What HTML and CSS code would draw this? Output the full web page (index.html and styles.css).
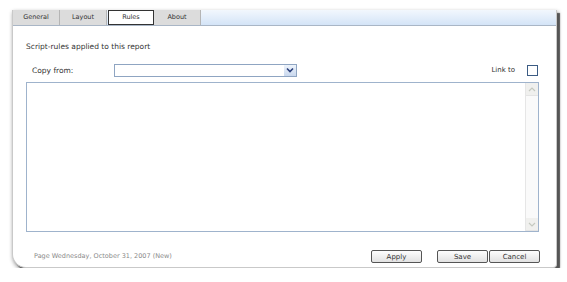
FILE: index.html
```html
<!DOCTYPE html>
<html lang="en">
<head>
    <meta charset="UTF-8">
    <title>Report Rules</title>
    <link rel="stylesheet" href="styles.css">
</head>
<body>
    <div class="window">
        <div class="tabs">
            <div class="tab">General</div>
            <div class="tab">Layout</div>
            <div class="tab active">Rules</div>
            <div class="tab">About</div>
        </div>
        <div class="content">
            <div class="title">Script-rules applied to this report</div>
            <div class="copy-row">
                <label class="copy-label">Copy from:</label>
                <div class="select">
                    <span class="select-btn">
                        <svg width="8" height="6" viewBox="0 0 8 6"><path d="M1 1.5 L4 4.5 L7 1.5" fill="none" stroke="#2a3f7a" stroke-width="1.6"/></svg>
                    </span>
                </div>
                <span class="link-label">Link to</span>
                <span class="checkbox"></span>
            </div>
            <div class="editor">
                <div class="editor-area"></div>
                <div class="scrollbar">
                    <span class="arrow">
                        <svg width="8" height="5" viewBox="0 0 8 5"><path d="M1 4 L4 1 L7 4" fill="none" stroke="#c5c9c0" stroke-width="1.2"/></svg>
                    </span>
                    <span class="arrow">
                        <svg width="8" height="5" viewBox="0 0 8 5"><path d="M1 1 L4 4 L7 1" fill="none" stroke="#c5c9c0" stroke-width="1.2"/></svg>
                    </span>
                </div>
            </div>
        </div>
        <div class="footer">
            <span class="status">Page Wednesday, October 31, 2007 (New)</span>
            <button class="btn apply">Apply</button>
            <button class="btn save">Save</button>
            <button class="btn">Cancel</button>
        </div>
    </div>
</body>
</html>
```

FILE: styles.css
```css
body {
    margin: 0;
    background: #fff;
    font-family: "DejaVu Sans", Verdana, sans-serif;
    color: #333;
}
.window {
    margin: 10px 0 0 12px;
    width: 543px;
    height: 257px;
    display: flex;
    flex-direction: column;
    background: #fff;
    border: 1px solid #c9c9c9;
    border-top: none;
    border-radius: 0 0 4px 14px;
    box-shadow: 3px 3px 1px #555, 1px 2px 4px #888;
}
.tabs {
    display: flex;
    height: 15px;
    background: linear-gradient(#f2f7fd, #d4e4f7);
    border-bottom: 1px solid #a9b6c6;
}
.tab {
    width: 46px;
    font-size: 6.5px;
    line-height: 15px;
    text-align: center;
    color: #333;
    background: #dcdcdc;
    border-right: 1px solid #b5b5b5;
}
.tab.active {
    background: #fff;
    border: 1px solid #333;
    line-height: 13px;
    box-sizing: border-box;
    height: 15px;
    margin-left: 1px;
}
.content {
    padding: 15px 17px 0 13px;
}
.title {
    font-size: 7.5px;
    color: #333;
    height: 11px;
    line-height: 11px;
}
.copy-row {
    display: flex;
    align-items: center;
    margin-top: 12px;
    height: 12px;
}
.copy-label {
    font-size: 7.5px;
    width: 82px;
    padding-left: 6px;
    color: #333;
}
.select {
    width: 181px;
    height: 11px;
    border: 1px solid #8fa5c2;
    display: flex;
    justify-content: flex-end;
}
.select-btn {
    width: 12px;
    height: 11px;
    background: linear-gradient(#edf3fb, #c9d8ee);
    display: flex;
    align-items: center;
    justify-content: center;
}
.link-label {
    margin-left: auto;
    font-size: 7px;
    color: #333;
    margin-right: 12px;
}
.checkbox {
    width: 9px;
    height: 9px;
    border: 1px solid #3c5c84;
    margin-right: 1px;
}
.editor {
    display: flex;
    margin-top: 6px;
    height: 148px;
    border: 1px solid #9fb3cc;
}
.editor-area {
    flex: 1;
}
.scrollbar {
    width: 12px;
    border-left: 1px solid #e6e6e6;
    display: flex;
    flex-direction: column;
    justify-content: space-between;
    background: #fafafa;
}
.arrow {
    height: 12px;
    display: flex;
    align-items: center;
    justify-content: center;
    background: #f0f0ee;
    border-bottom: 1px solid #e4e4e4;
}
.footer {
    flex: 1;
    display: flex;
    align-items: flex-end;
    padding: 0 16px 4px 21px;
}
.status {
    font-size: 6.5px;
    line-height: 13px;
    color: #8a8a8a;
    margin-right: auto;
}
.btn {
    font-family: "DejaVu Sans", Verdana, sans-serif;
    font-size: 7px;
    color: #333;
    width: 51px;
    height: 13px;
    padding: 0;
    border: 1px solid #555;
    border-radius: 2px;
    background: linear-gradient(#fdfdfd, #e2e2e2);
}
.apply {
    margin-right: 15px;
}
.save {
    margin-right: 1px;
}
```
